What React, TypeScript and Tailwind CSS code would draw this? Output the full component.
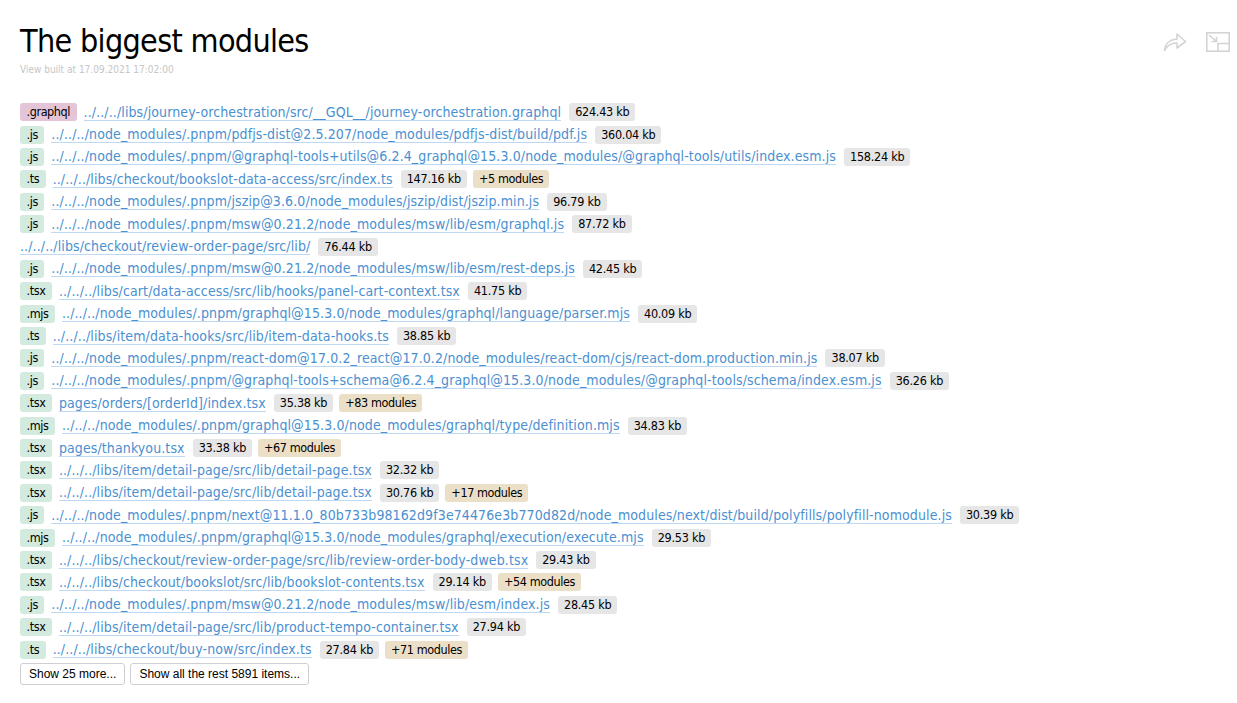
const rows: { ext?: string; tag?: string; path: string; size: string; more?: string }[] = [
  { ext: '.graphql', tag: 'bg-[#e3c5d7]', path: '../../../libs/journey-orchestration/src/__GQL__/journey-orchestration.graphql', size: '624.43 kb' },
  { ext: '.js', path: '../../../node_modules/.pnpm/pdfjs-dist@2.5.207/node_modules/pdfjs-dist/build/pdf.js', size: '360.04 kb' },
  { ext: '.js', path: '../../../node_modules/.pnpm/@graphql-tools+utils@6.2.4_graphql@15.3.0/node_modules/@graphql-tools/utils/index.esm.js', size: '158.24 kb' },
  { ext: '.ts', path: '../../../libs/checkout/bookslot-data-access/src/index.ts', size: '147.16 kb', more: '+5 modules' },
  { ext: '.js', path: '../../../node_modules/.pnpm/jszip@3.6.0/node_modules/jszip/dist/jszip.min.js', size: '96.79 kb' },
  { ext: '.js', path: '../../../node_modules/.pnpm/msw@0.21.2/node_modules/msw/lib/esm/graphql.js', size: '87.72 kb' },
  { path: '../../../libs/checkout/review-order-page/src/lib/', size: '76.44 kb' },
  { ext: '.js', path: '../../../node_modules/.pnpm/msw@0.21.2/node_modules/msw/lib/esm/rest-deps.js', size: '42.45 kb' },
  { ext: '.tsx', path: '../../../libs/cart/data-access/src/lib/hooks/panel-cart-context.tsx', size: '41.75 kb' },
  { ext: '.mjs', path: '../../../node_modules/.pnpm/graphql@15.3.0/node_modules/graphql/language/parser.mjs', size: '40.09 kb' },
  { ext: '.ts', path: '../../../libs/item/data-hooks/src/lib/item-data-hooks.ts', size: '38.85 kb' },
  { ext: '.js', path: '../../../node_modules/.pnpm/react-dom@17.0.2_react@17.0.2/node_modules/react-dom/cjs/react-dom.production.min.js', size: '38.07 kb' },
  { ext: '.js', path: '../../../node_modules/.pnpm/@graphql-tools+schema@6.2.4_graphql@15.3.0/node_modules/@graphql-tools/schema/index.esm.js', size: '36.26 kb' },
  { ext: '.tsx', path: 'pages/orders/[orderId]/index.tsx', size: '35.38 kb', more: '+83 modules' },
  { ext: '.mjs', path: '../../../node_modules/.pnpm/graphql@15.3.0/node_modules/graphql/type/definition.mjs', size: '34.83 kb' },
  { ext: '.tsx', path: 'pages/thankyou.tsx', size: '33.38 kb', more: '+67 modules' },
  { ext: '.tsx', path: '../../../libs/item/detail-page/src/lib/detail-page.tsx', size: '32.32 kb' },
  { ext: '.tsx', path: '../../../libs/item/detail-page/src/lib/detail-page.tsx', size: '30.76 kb', more: '+17 modules' },
  { ext: '.js', path: '../../../node_modules/.pnpm/next@11.1.0_80b733b98162d9f3e74476e3b770d82d/node_modules/next/dist/build/polyfills/polyfill-nomodule.js', size: '30.39 kb' },
  { ext: '.mjs', path: '../../../node_modules/.pnpm/graphql@15.3.0/node_modules/graphql/execution/execute.mjs', size: '29.53 kb' },
  { ext: '.tsx', path: '../../../libs/checkout/review-order-page/src/lib/review-order-body-dweb.tsx', size: '29.43 kb' },
  { ext: '.tsx', path: '../../../libs/checkout/bookslot/src/lib/bookslot-contents.tsx', size: '29.14 kb', more: '+54 modules' },
  { ext: '.js', path: '../../../node_modules/.pnpm/msw@0.21.2/node_modules/msw/lib/esm/index.js', size: '28.45 kb' },
  { ext: '.tsx', path: '../../../libs/item/detail-page/src/lib/product-tempo-container.tsx', size: '27.94 kb' },
  { ext: '.ts', path: '../../../libs/checkout/buy-now/src/index.ts', size: '27.84 kb', more: '+71 modules' },
];

const App = () => {
  return (
    <div className="min-h-[703px] bg-white pl-5 pr-[7px] pt-5 text-black font-['DejaVu_Sans_Condensed','Noto_Sans',sans-serif] text-[14px] leading-[22.4px]">
      <div className="flex justify-between">
        <div>
          <h1 className="text-[32px] leading-[42px] font-normal tracking-[-0.68px]">The biggest modules</h1>
          <div className="mt-[1px] text-[10px] leading-[14px] text-[#c6c6c6]">View built at 17.09.2021 17:02:00</div>
        </div>
        <div className="flex gap-[19px] pt-[12px] h-fit">
          <svg width="24" height="20" viewBox="0 0 24 20" fill="none" stroke="#d4d4d4" strokeWidth="1.6" strokeLinejoin="round">
            <path d="M1.5 18.5C2 12 6.5 7.5 14 7V2l8.5 7.5L14 16v-5C9 10.8 4.5 13 1.5 18.5z" />
          </svg>
          <svg width="24" height="20" viewBox="0 0 24 20" fill="none" stroke="#d4d4d4" strokeWidth="1.6">
            <rect x="0.8" y="0.8" width="22.4" height="18.4" />
            <path d="M12 19.2V11.5h11.2M3 3l7 6M10.5 4.8V9.5H5.5" />
          </svg>
        </div>
      </div>
      <div className="mt-[24px]">
        {rows.map((row, i) => (
          <div key={i} className="flex items-center h-[22.4px] whitespace-nowrap">
            {row.ext && (
              <span className={`${row.tag ?? 'bg-[#d3eadf]'} rounded-[3px] px-[6.5px] h-[18px] leading-[18px] mr-[7px] text-[12.5px] tracking-[-0.4px]`}>{row.ext}</span>
            )}
            <a href="#" className="mt-[1px] text-[#4a8fd0] border-b border-[#bcd8f3] leading-[15px] tracking-[0.11px]">{row.path}</a>
            <span className="bg-[#e6e6e6] rounded-[3px] px-[6px] h-[18px] leading-[18px] ml-[8px] text-[12.5px] tracking-[-0.25px]">{row.size}</span>
            {row.more && (
              <span className="bg-[#ebdfc8] rounded-[3px] px-[6px] h-[18px] leading-[18px] ml-[6px] text-[12.5px] tracking-[-0.4px]">{row.more}</span>
            )}
          </div>
        ))}
      </div>
      <div className="flex gap-[5px] mt-[2px]">
        <button className="h-[22px] px-[8px] bg-white border border-[#cfcfcf] rounded-[3px] text-[12px] leading-[20px] font-['Liberation_Sans',sans-serif]">Show 25 more...</button>
        <button className="h-[22px] px-[8px] bg-white border border-[#cfcfcf] rounded-[3px] text-[12px] leading-[20px] font-['Liberation_Sans',sans-serif]">Show all the rest 5891 items...</button>
      </div>
    </div>
  );
};

export default App;
